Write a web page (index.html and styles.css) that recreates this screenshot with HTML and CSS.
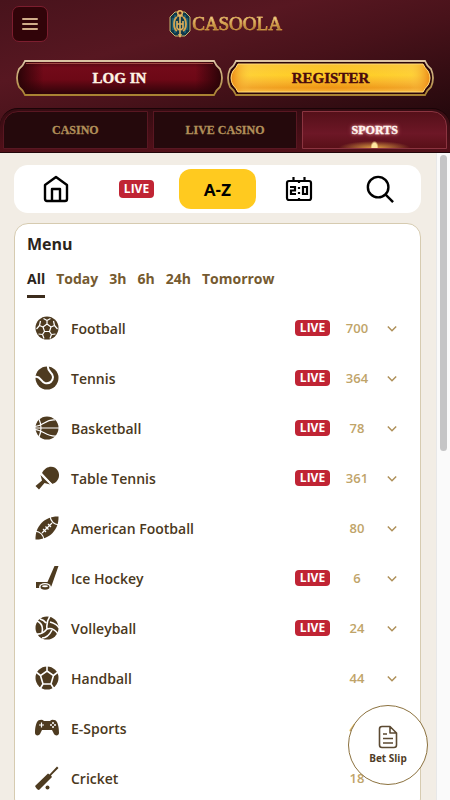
FILE: index.html
```html
<!DOCTYPE html>
<html lang="en">

<head>
    <meta charset="UTF-8">
    <meta name="viewport" content="width=device-width, initial-scale=1.0">
    <title>Casoola Sports</title>
    <link rel="stylesheet" href="styles.css">
</head>

<body>
    <header class="header">
        <div class="top">
            <button class="burger" aria-label="Open menu"><span></span><span></span><span></span></button>
            <a class="logo" href="#">
                <svg width="24" height="30" viewBox="0 0 24 30" fill="none">
                    <path d="M7 3h10l5 5v14l-5 5H7l-5-5V8z" fill="#10394a" stroke="#c9b36d" />
                    <path d="M5 9v12M7 6v18M17 6v18M19 9v12" stroke="#238099" stroke-width="1" />
                    <path d="M9 8q-3 2-3 7t3 7M15 8q3 2 3 7t-3 7" stroke="#d6a550" stroke-width="1.8" />
                    <path d="M12 5v23M9 12v7q3 4 6 0v-7M9 15h6M9 7h6" stroke="#e0b260" stroke-width="1.6" />
                    <circle cx="12" cy="4" r="2.3" fill="#5a2920" stroke="#edbd62" stroke-width="1.4" />
                    <path d="M10 25l2 4 2-4z" fill="#e0b260" />
                </svg>
                <span>CASOOLA</span>
            </a>
        </div>
        <div class="account">
            <button class="account-btn login">
                <svg viewBox="0 0 207 36" preserveAspectRatio="none">
                    <defs>
                        <linearGradient id="rim" x1="0" y1="0" x2="0" y2="1">
                            <stop offset="0" stop-color="#dcc4a4" />
                            <stop offset="1" stop-color="#a98232" />
                        </linearGradient>
                        <linearGradient id="red" x1="0" y1="0" x2="0" y2="1">
                            <stop offset="0" stop-color="#4c0911" />
                            <stop offset=".2" stop-color="#730a19" />
                            <stop offset=".55" stop-color="#6d0816" />
                            <stop offset="1" stop-color="#290308" />
                        </linearGradient>
                        <linearGradient id="side" x1="0" y1="0" x2="1" y2="0">
                            <stop offset="0" stop-color="#290307" />
                            <stop offset=".13" stop-color="#290307" stop-opacity="0" />
                            <stop offset=".87" stop-color="#290307" stop-opacity="0" />
                            <stop offset="1" stop-color="#290307" />
                        </linearGradient>
                    </defs>
                    <path d="M9 1H198Q200 6 204 9Q208 18 204 27Q200 30 198 35H9Q7 30 3 27Q-1 18 3 9Q7 6 9 1Z" fill="url(#red)" />
                    <path d="M9 1H198Q200 6 204 9Q208 18 204 27Q200 30 198 35H9Q7 30 3 27Q-1 18 3 9Q7 6 9 1Z" fill="url(#side)" stroke="url(#rim)" stroke-width="1.8" />
                    <path d="M10 3.500H197" stroke="#a14b45" />
                </svg>
                <span>LOG IN</span>
            </button>
            <button class="account-btn register">
                <svg viewBox="0 0 207 36" preserveAspectRatio="none">
                    <defs>
                        <linearGradient id="gold" x1="0" y1="0" x2="0" y2="1">
                            <stop offset="0" stop-color="#f8bd32" />
                            <stop offset=".4" stop-color="#ffca24" />
                            <stop offset=".65" stop-color="#f6a923" />
                            <stop offset=".85" stop-color="#ec8c14" />
                            <stop offset="1" stop-color="#f8ad3b" />
                        </linearGradient>
                        <linearGradient id="goldside" x1="0" y1="0" x2="1" y2="0">
                            <stop offset="0" stop-color="#ec8a16" />
                            <stop offset=".1" stop-color="#ffe25d" stop-opacity=".3" />
                            <stop offset=".5" stop-color="#ffdc20" stop-opacity=".1" />
                            <stop offset=".9" stop-color="#ffe25d" stop-opacity=".3" />
                            <stop offset="1" stop-color="#ec8a16" />
                        </linearGradient>
                    </defs>
                    <path d="M9 1H198Q200 6 204 9Q208 18 204 27Q200 30 198 35H9Q7 30 3 27Q-1 18 3 9Q7 6 9 1Z" fill="#2b0509" stroke="url(#rim)" stroke-width="1.8" />
                    <path d="M11 4H196Q198 8 201 11Q205 18 201 25Q198 28 196 32H11Q9 28 6 25Q2 18 6 11Q9 8 11 4Z" fill="url(#gold)" />
                    <path d="M11 4H196Q198 8 201 11Q205 18 201 25Q198 28 196 32H11Q9 28 6 25Q2 18 6 11Q9 8 11 4Z" fill="url(#goldside)" stroke="#ffda79" />
                </svg>
                <span>REGISTER</span>
            </button>
        </div>
        <nav class="sections">
            <a href="#">CASINO</a>
            <a href="#">LIVE CASINO</a>
            <a href="#" class="active">SPORTS</a>
        </nav>
    </header>

    <div class="page">
        <main class="content">
            <nav class="toolbar">
                <a href="#" aria-label="Home">
                    <svg width="26" height="28" viewBox="0 0 26 28" fill="none" stroke="#000" stroke-width="2.400" stroke-linejoin="round">
                        <path d="M2 10L13 2l11 8v14q0 2-2 2H4q-2 0-2-2z" />
                        <path d="M9 26V14h8v12" />
                    </svg>
                </a>
                <a href="#"><span class="live live-big">LIVE</span></a>
                <a href="#" class="active">A-Z</a>
                <a href="#" aria-label="Scores">
                    <svg width="28" height="26" viewBox="0 0 28 26" fill="none" stroke="#000" stroke-width="2.200">
                        <rect x="2" y="5" width="24" height="19" rx="2" />
                        <path d="M8.500 1v4M19.500 1v4M14 5v2M14 22v2" />
                        <path d="M5 11h5v3.500H6V18h5M18 11h4v7h-4zM14 11v2M14 16v2" />
                    </svg>
                </a>
                <a href="#" aria-label="Search">
                    <svg width="28" height="28" viewBox="0 0 30 30" fill="none" stroke="#000" stroke-width="2.600">
                        <circle cx="13" cy="13" r="11" />
                        <path d="M20.500 20.500L29 29" />
                    </svg>
                </a>
            </nav>

            <section class="menu">
                <h1>Menu</h1>
                <div class="periods">
                    <button class="active">All</button>
                    <button>Today</button>
                    <button>3h</button>
                    <button>6h</button>
                    <button>24h</button>
                    <button>Tomorrow</button>
                </div>
                <ul class="sports">
                    <li>
                        <svg class="icon" viewBox="0 0 24 24">
                            <circle cx="12" cy="12" r="11.500" />
                            <g class="cut">
                                <path d="M12 8l4 3-1.500 4.500h-5L8 11zM12 8V4.500M16 11l3.500-1.500M14.500 15.500l2 3M9.500 15.500l-2 3M8 11L4.500 9.500" />
                                <path d="M12 4.500L8.500 2.500M12 4.500l3.500-2M19.500 9.500L18.500 5M19.500 9.500l3 3.500M16.500 18.500l4-.5M16.500 18.500L15 22.500M7.500 18.500l-4-.5M7.500 18.500L9 22.500M4.500 9.500l1-4.500M4.500 9.500l-3 3.500" />
                            </g>
                        </svg>
                        <a href="#">Football</a><span class="live">LIVE</span><span class="count">700</span>
                        <svg class="chevron" viewBox="0 0 12 8"><path d="M1 1l5 5 5-5" /></svg>
                    </li>
                    <li>
                        <svg class="icon" viewBox="0 0 24 24">
                            <circle cx="12" cy="12" r="11.500" />
                            <path class="cut wide" d="M0 11C5 9 6 16 10 17c5 1 8-2 8-6 0-5-6-5-5-11" />
                        </svg>
                        <a href="#">Tennis</a><span class="live">LIVE</span><span class="count">364</span>
                        <svg class="chevron" viewBox="0 0 12 8"><path d="M1 1l5 5 5-5" /></svg>
                    </li>
                    <li>
                        <svg class="icon" viewBox="0 0 24 24">
                            <circle cx="12" cy="12" r="11.500" />
                            <path class="cut" d="M0 12h24M4 3q4 9 0 18M0 10.500C8 10 11 3 20 4M0 13.500C8 14 12 21 21 20" />
                        </svg>
                        <a href="#">Basketball</a><span class="live">LIVE</span><span class="count">78</span>
                        <svg class="chevron" viewBox="0 0 12 8"><path d="M1 1l5 5 5-5" /></svg>
                    </li>
                    <li>
                        <svg class="icon" viewBox="0 0 24 24">
                            <path d="M7 7C11-1 20-1 23 5s-1 12-6 13z" />
                            <path d="M5.500 9L15 18.500 9.500 17 4 23.500.5 20 7 14.500z" />
                            <path class="cut" d="M5.500 7L17.500 19" />
                        </svg>
                        <a href="#">Table Tennis</a><span class="live">LIVE</span><span class="count">361</span>
                        <svg class="chevron" viewBox="0 0 12 8"><path d="M1 1l5 5 5-5" /></svg>
                    </li>
                    <li>
                        <svg class="icon" viewBox="0 0 24 24">
                            <path d="M.5 23.500C0 10 10 0 23.500.5 24 14 14 24 .5 23.500z" />
                            <path class="cut" d="M0 15q8 1 9 9M15 0q1 8 9 9M7 17L17 7M8 13l3 3M10.500 10.500l3 3M13 8l3 3" />
                        </svg>
                        <a href="#">American Football</a><span class="count">80</span>
                        <svg class="chevron" viewBox="0 0 12 8"><path d="M1 1l5 5 5-5" /></svg>
                    </li>
                    <li>
                        <svg class="icon" viewBox="0 0 24 24">
                            <path d="M19.500 0H23.500L16.500 20q-.5 2-3 2H1V16h11.500z" />
                            <ellipse class="cut-fill" cx="10" cy="21" rx="6" ry="4" />
                            <ellipse cx="10" cy="21" rx="4.500" ry="2.800" />
                            <ellipse class="cut-fill" cx="10" cy="20.200" rx="3" ry="1" />
                        </svg>
                        <a href="#">Ice Hockey</a><span class="live">LIVE</span><span class="count">6</span>
                        <svg class="chevron" viewBox="0 0 12 8"><path d="M1 1l5 5 5-5" /></svg>
                    </li>
                    <li>
                        <svg class="icon" viewBox="0 0 24 24">
                            <circle cx="12" cy="12" r="11.500" />
                            <path class="cut thick" d="M12 13Q11 6 15 0M12 13q6-2 11 5M12 13q-5 6-11 5M2 5q7 3 5 12M15 6q7 2 9 6M7 22q6 0 10-8M5 3q4 1 6 4" />
                        </svg>
                        <a href="#">Volleyball</a><span class="live">LIVE</span><span class="count">24</span>
                        <svg class="chevron" viewBox="0 0 12 8"><path d="M1 1l5 5 5-5" /></svg>
                    </li>
                    <li>
                        <svg class="icon" viewBox="0 0 24 24">
                            <circle cx="12" cy="12" r="11.500" />
                            <path class="cut thick" d="M12 5l6.500 4.500L16 18H8L5.500 9.500zM12 5V0M18.500 9.500L23 6M16 18l3 5M8 18l-3 5M5.500 9.500L1 6" />
                        </svg>
                        <a href="#">Handball</a><span class="count">44</span>
                        <svg class="chevron" viewBox="0 0 12 8"><path d="M1 1l5 5 5-5" /></svg>
                    </li>
                    <li>
                        <svg class="icon" viewBox="0 0 24 24">
                            <path d="M5 4q2-1 4 1h6q2-2 4-1c4 0 5 8 5 13 0 3-4 3-5 1l-2-4H7l-2 4c-1 2-5 2-5-1C0 12 1 4 5 4z" />
                            <path class="cut" d="M4 9h5M6.500 6.500v5" />
                            <g class="cut-fill">
                                <circle cx="18" cy="7" r="1" /><circle cx="18" cy="11" r="1" /><circle cx="16" cy="9" r="1" /><circle cx="20" cy="9" r="1" />
                            </g>
                        </svg>
                        <a href="#">E-Sports</a><span class="count">41</span>
                        <svg class="chevron" viewBox="0 0 12 8"><path d="M1 1l5 5 5-5" /></svg>
                    </li>
                    <li>
                        <svg class="icon" viewBox="0 0 24 24">
                            <path d="M0 20L13 7.500l1.500 1L22 .5 23.500 2 16 9.500l1 1.500L4 24q-2 0-4-4z" />
                            <circle cx="12.500" cy="21.500" r="2" />
                        </svg>
                        <a href="#">Cricket</a><span class="count">18</span>
                        <svg class="chevron" viewBox="0 0 12 8"><path d="M1 1l5 5 5-5" /></svg>
                    </li>
                </ul>
            </section>
        </main>
        <div class="scrollbar"><div class="thumb"></div></div>
    </div>

    <button class="betslip">
        <svg width="20" height="24" viewBox="0 0 20 24" fill="none" stroke="#5c4a32" stroke-width="1.600" stroke-linejoin="round">
            <path d="M12 1.500H4Q1.500 1.500 1.500 4v16q0 2.500 2.500 2.500h12q2.500 0 2.500-2.500V8zM12 1.500V8h6.500M5 9h4M5 13.500h10M5 18h10" />
        </svg>
        <span>Bet Slip</span>
    </button>
</body>

</html>
```
FILE: styles.css
```css
* {
    margin: 0;
    padding: 0;
    box-sizing: border-box;
}

body {
    display: flex;
    flex-direction: column;
    height: 100vh;
    overflow: hidden;
    background-color: #f2ede5;
    font-family: "Open Sans", sans-serif;
}

a {
    color: inherit;
    text-decoration: none;
}

button {
    border: none;
    background: none;
    font-family: inherit;
    cursor: pointer;
}

li {
    list-style: none;
}

/* header */
.header {
    flex: none;
    background: linear-gradient(165deg, #48131c 0%, #571721 30%, #48121a 50%, #26090d 85%);
    font-family: "Liberation Serif", serif;
    font-weight: bold;
}

.top {
    display: grid;
    grid-template-columns: 36px 1fr 36px;
    align-items: center;
    padding: 6px 12px 0;
}

.burger {
    display: flex;
    flex-direction: column;
    align-items: center;
    justify-content: center;
    gap: 3px;
    height: 36px;
    border: 1px solid #7d1e2f;
    border-radius: 7px;
    background-color: #310409;
}

.burger span {
    width: 16px;
    height: 2px;
    border-radius: 1px;
    background-color: #d0ad89;
}

.logo {
    display: flex;
    align-items: center;
    justify-content: center;
}

.logo span {
    background: linear-gradient(#f7d895 20%, #d4a04d 50%, #a66d29 80%);
    background-clip: text;
    color: transparent;
    font-size: 19px;
    font-weight: normal;
    -webkit-text-stroke: 0.5px #d4a04d;
}

.account {
    display: flex;
    gap: 4px;
    padding: 18px 16px 12px;
}

.account-btn {
    position: relative;
    flex: 1;
    height: 36px;
    color: #fff4e4;
    font-size: 15px;
    font-weight: bold;
    -webkit-text-stroke: 0.4px currentColor;
}

.account-btn svg {
    position: absolute;
    top: 0;
    left: 0;
    width: 100%;
    height: 100%;
}

.account-btn span {
    position: relative;
}

.register {
    color: #4a0a0d;
}

.sections {
    display: flex;
    gap: 5px;
    padding: 2px 3px 3px;
    border-top: 1px solid #190407;
    border-bottom: 1px solid #210509;
    border-radius: 18px 18px 0 0;
    background: linear-gradient(#350c12, #521019);
}

.sections a {
    flex: 1;
    border: 1px solid #591722;
    background-color: #25090c;
    color: #b18f59;
    font-size: 12px;
    line-height: 36px;
    text-align: center;
    -webkit-text-stroke: 0.3px currentColor;
}

.sections a:first-child {
    border-top-left-radius: 15px;
}

.sections a:last-child {
    border-top-right-radius: 15px;
}

.sections .active {
    border-color: #8b3440;
    background: radial-gradient(ellipse 4px 6px at 50% 97%, #ffe8a0 60%, transparent), radial-gradient(ellipse 36px 7px at 50% 100%, #e0a043, transparent), linear-gradient(#551019, #6d1726 60%, #591018);
    color: #fff5f0;
    text-shadow: 0 0 3px #f1a5a5, 0 0 5px #df7782;
}

/* page */
.page {
    display: flex;
    flex: 1;
    min-height: 0;
}

.content {
    flex: 1;
    min-width: 0;
    padding: 12px 15px 0 14px;
    overflow: hidden;
}

.scrollbar {
    width: 14px;
    padding: 2px 3px;
    border-left: 1px solid #e8e8e8;
    background-color: #fafafa;
}

.thumb {
    height: 46%;
    border-radius: 4px;
    background-color: #c5c5c6;
}

.toolbar {
    display: flex;
    gap: 4px;
    padding: 4px 3px;
    border-radius: 14px;
    background-color: #fff;
}

.toolbar a {
    display: flex;
    flex: 1;
    align-items: center;
    justify-content: center;
    height: 40px;
    border-radius: 12px;
    color: #000;
    font-family: "Lato", sans-serif;
    font-size: 16px;
    font-weight: 800;
}

.toolbar .active {
    background-color: #ffca1f;
}

.live {
    width: 35px;
    border-radius: 4px;
    background-color: #c02434;
    color: #fff;
    font-family: "Open Sans", sans-serif;
    font-size: 12px;
    font-weight: 700;
    line-height: 16px;
    text-align: center;
}

.live-big {
    line-height: 18px;
}

/* sports menu */
.menu {
    margin-top: 10px;
    padding: 9px 12px;
    border: 1px solid #d6cbb0;
    border-radius: 14px;
    background-color: #fff;
}

.menu h1 {
    color: #2b241b;
    font-size: 16px;
    font-weight: 700;
    line-height: 22px;
}

.periods {
    display: flex;
    gap: 11px;
    margin-top: 13px;
}

.periods button {
    padding-bottom: 5px;
    border-bottom: 3px solid transparent;
    color: #755a30;
    font-size: 14px;
    font-weight: 700;
    line-height: 22px;
}

.periods .active {
    border-color: #3c2c1c;
    color: #2b241b;
}

.sports {
    padding: 5px 10px 0 8px;
}

.sports li {
    display: flex;
    align-items: center;
    height: 50px;
    color: #4a3820;
    font-size: 14px;
    font-weight: 600;
}

.sports a {
    flex: 1;
    margin-left: 12px;
}

.icon {
    width: 24px;
    height: 24px;
    fill: #4e3b20;
}

.cut {
    fill: none;
    stroke: #fff;
    stroke-width: 1.2;
}

.thick {
    stroke-width: 1.6;
}

.wide {
    stroke-width: 2;
}

.cut-fill {
    fill: #fff;
}

.count {
    width: 54px;
    color: #bfa469;
    font-size: 13px;
    font-weight: 600;
    text-align: center;
}

.chevron {
    width: 10px;
    height: 8px;
    margin: 2px 1px 0 3px;
    fill: none;
    stroke: #ae8f58;
    stroke-width: 1.8;
}

.betslip {
    position: fixed;
    right: 22px;
    bottom: 15px;
    display: flex;
    flex-direction: column;
    align-items: center;
    justify-content: center;
    gap: 2px;
    width: 80px;
    height: 80px;
    border: 1px solid #8b713e;
    border-radius: 50%;
    background-color: #fff;
    color: #4f3c27;
    font-size: 10px;
    font-weight: 700;
    line-height: 14px;
}
```
